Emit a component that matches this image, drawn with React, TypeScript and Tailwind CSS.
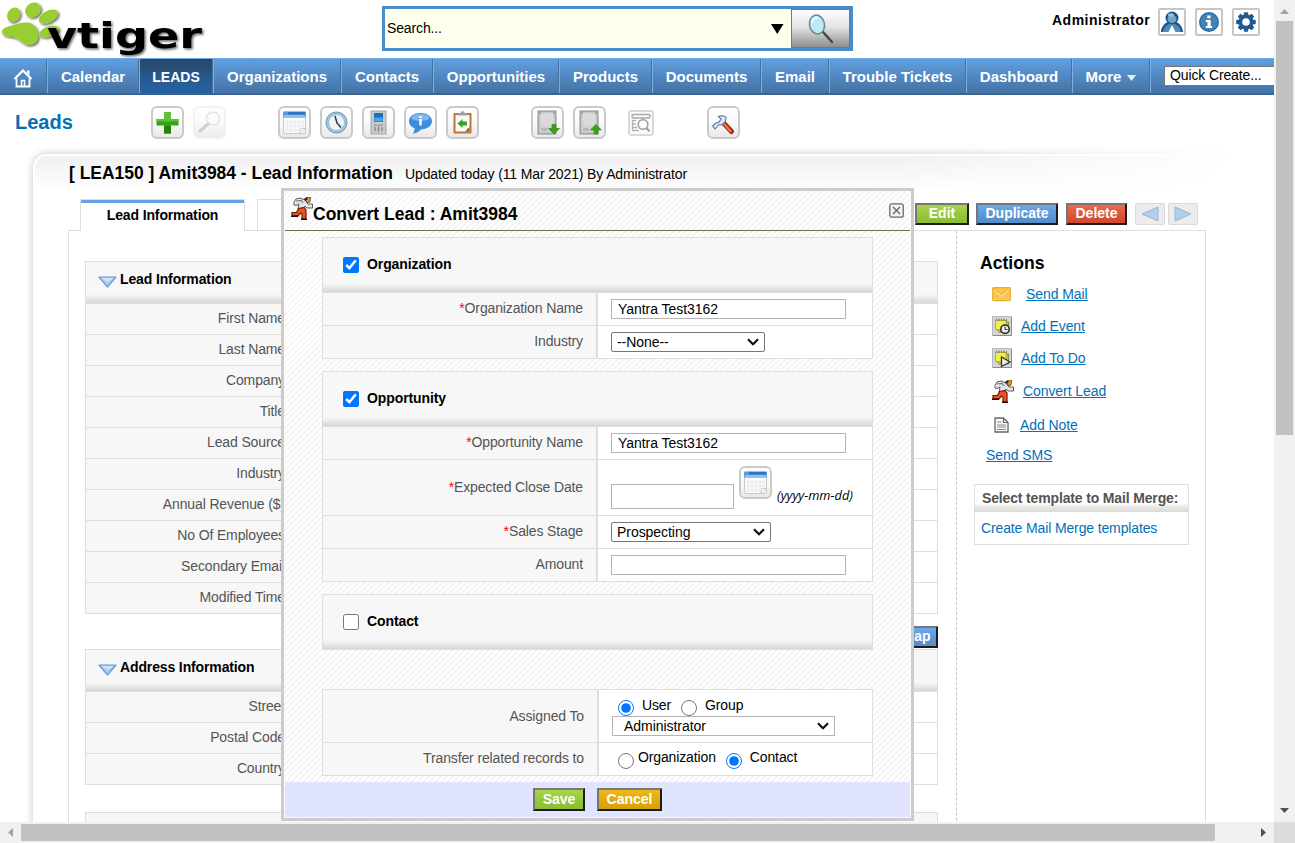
import React from "react";

const HEAD =
  "bg-[linear-gradient(to_bottom,#f7f7f7_0,#f7f7f7_calc(100%-9px),#eeeeea_calc(100%-6px),#d6d7d2_100%)]";

function Logo() {
  return (
    <svg width="206" height="58" viewBox="0 0 206 58" className="block">
      <defs>
        <filter id="ls" x="-10%" y="-10%" width="130%" height="140%">
          <feDropShadow dx="1.5" dy="1.5" stdDeviation="1" floodColor="#000" floodOpacity=".6" />
        </filter>
      </defs>
      <g fill="#9acd32" filter="url(#ls)">
        <ellipse cx="13.700" cy="14.800" rx="6.300" ry="7.500" transform="rotate(30 13.700 14.800)" />
        <ellipse cx="33" cy="10" rx="8.200" ry="7" transform="rotate(-35 33 10)" />
        <ellipse cx="48.500" cy="16.700" rx="10.500" ry="5.800" transform="rotate(-28 48.500 16.700)" />
        <ellipse cx="49" cy="31.500" rx="10.500" ry="5" transform="rotate(-20 49 31.500)" />
        <path d="M2 32C2 28 7 27 12 25.500C18 23.500 27 21 32 24C37 27 39 33 38 38C37 43 33 45 29 45C23 45 19 38 13 37C8 36.500 2 36 2 32Z" />
      </g>
      <text x="47" y="48" fontFamily="DejaVu Sans" fontWeight="700" fontSize="36" textLength="155" lengthAdjust="spacingAndGlyphs" fill="#000" filter="url(#ls)">
        vtiger
      </text>
    </svg>
  );
}

function HeaderIcon({ children }: { children: React.ReactNode }) {
  return (
    <span className="flex h-[28px] w-[28px] items-center justify-center rounded-[2px] border-2 border-[#c6c6c6] bg-white">
      <svg width="24" height="24" viewBox="0 0 24 24">{children}</svg>
    </span>
  );
}

function Header() {
  return (
    <div className="flex h-[58px] shrink-0">
      <div className="w-[382px]">
        <Logo />
      </div>
      <div className="mt-[6px] flex h-[45px] w-[471px] border-[3px] border-[#4a8bcb] bg-[#ffffee]">
        <div className="flex flex-1 items-center pl-[2px] pr-[7px] text-[14px] tracking-[-0.13px] text-black">
          <span>Search...</span>
          <svg className="ml-auto" width="13" height="10" viewBox="0 0 13 10">
            <path d="M0 0H12.500L6.250 10Z" fill="#000" />
          </svg>
        </div>
        <div className="flex w-[59px] items-center justify-center border border-[#777] bg-[linear-gradient(#ffffff,#e4e4e4_45%,#8f8f8f)]">
          <svg width="28" height="32" viewBox="0 0 28 32">
            <path d="M16 19L25 29" stroke="#444" strokeWidth="2.400" strokeLinecap="round" />
            <ellipse cx="10" cy="11.500" rx="7.500" ry="9.500" fill="#bdeaf6" stroke="#6d8790" strokeWidth="1.500" transform="rotate(-12 10 11.500)" />
            <path d="M5 10C5.500 6 8 4.500 11 4.500" stroke="#fff" strokeWidth="1.800" fill="none" opacity=".8" />
          </svg>
        </div>
      </div>
      <div className="ml-[199px] flex h-[44px] items-start pt-[8px]">
        <span className="mr-[8px] w-[98px] whitespace-nowrap text-[14px] font-bold leading-[24px] tracking-[0.5px]">Administrator</span>
        <div className="flex gap-[9px]">
          <HeaderIcon>
            <path d="M1 22C1.500 17.500 4 13.500 8 12H16C20 13.500 22.500 17.500 23 22H15.500L12 15L8.500 22Z" fill="#4d8cbc" />
            <path d="M1 22C1.500 17.500 4 13.500 8 12L10 13.500C6 15 3.500 18 3 22ZM23 22C22.500 17.500 20 13.500 16 12L14 13.500C18 15 20.500 18 21 22Z" fill="#1d5788" />
            <circle cx="12" cy="8" r="6.500" fill="#1d5788" />
            <ellipse cx="12" cy="9" rx="4.500" ry="4" fill="#6fa4cc" />
            <ellipse cx="11" cy="5" rx="3" ry="1.800" fill="#9cc3df" />
          </HeaderIcon>
          <HeaderIcon>
            <circle cx="12" cy="12" r="10" fill="#2d6da2" />
            <circle cx="12" cy="12" r="8.500" fill="#4283b3" />
            <path d="M10.300 5.500H13.500V8.300H10.300ZM8.800 10H13.700V16H15V18H8.800V16H10.500V12H8.800Z" fill="#fff" />
          </HeaderIcon>
          <HeaderIcon>
            <g fill="#1c5a8f">
              <circle cx="12" cy="12" r="7.600" />
              {[0, 45, 90, 135].map((a) => (
                <rect key={a} x="9.800" y="2.200" width="4.400" height="19.600" rx="1" transform={`rotate(${a} 12 12)`} />
              ))}
            </g>
            <circle cx="12" cy="12" r="3.800" fill="#fff" />
          </HeaderIcon>
        </div>
      </div>
    </div>
  );
}

function NavItem({ w, label, active, more }: { w: string; label: string; active?: boolean; more?: boolean }) {
  return (
    <div
      className={
        "flex h-[35px] items-center justify-center whitespace-nowrap border-l border-l-[#7db0e0] border-r border-r-[#41719f] pt-[2px] font-bold text-white " +
        w +
        (active ? " bg-[linear-gradient(#2a4766,#27588c_50%,#2463a5)] text-[14px]" : " text-[15px]")
      }
    >
      {label}
      {more && (
        <svg className="ml-[6px]" width="9" height="6" viewBox="0 0 9 6">
          <path d="M0 0H9L4.500 6Z" fill="#e6eef7" />
        </svg>
      )}
    </div>
  );
}

function Nav() {
  return (
    <div className="flex h-[37px] shrink-0 overflow-hidden border-b-2 border-t border-b-[#3a6592] border-t-[#6aabe9] bg-[linear-gradient(#619fe0,#4372a5)]">
      <div className="flex h-[35px] w-[47px] shrink-0 items-center justify-center border-r border-r-[#41719f] pt-[2px]">
        <svg width="20" height="20" viewBox="0 0 20 20">
          <path d="M3.500 10.500V18.500H16.500V10.500" fill="none" stroke="#fff" strokeWidth="1.800" />
          <path d="M8.500 18V12.500H11.500V18" fill="none" stroke="#fff" strokeWidth="1.500" />
          <path d="M1.500 11L10 2.500L18.500 11" fill="none" stroke="#fff" strokeWidth="2.200" />
          <path d="M14 2.500H16.500V7L14 5Z" fill="#fff" />
        </svg>
      </div>
      <NavItem w="w-[92px] shrink-0" label="Calendar" />
      <NavItem w="w-[74px] shrink-0" label="LEADS" active />
      <NavItem w="w-[128px] shrink-0" label="Organizations" />
      <NavItem w="w-[92px] shrink-0" label="Contacts" />
      <NavItem w="w-[126px] shrink-0" label="Opportunities" />
      <NavItem w="w-[93px] shrink-0" label="Products" />
      <NavItem w="w-[109px] shrink-0" label="Documents" />
      <NavItem w="w-[68px] shrink-0" label="Email" />
      <NavItem w="w-[137px] shrink-0" label="Trouble Tickets" />
      <NavItem w="w-[106px] shrink-0" label="Dashboard" />
      <NavItem w="w-[78px] shrink-0" label="More" more />
      <div className="flex flex-1 border-l border-l-[#7db0e0] pl-[13px] pt-[7px]">
        <div className="h-[20px] w-[160px] shrink-0 whitespace-nowrap border border-[#767676] bg-white pl-[5px] text-[14px] leading-[17px] tracking-[-0.13px] text-black">
          Quick Create...
        </div>
      </div>
    </div>
  );
}

function Tool({ children, faded }: { children: React.ReactNode; faded?: boolean }) {
  return (
    <span
      className={
        "flex h-[33px] w-[33px] shrink-0 items-center justify-center rounded-[6px] border-2 bg-[linear-gradient(#ffffff,#f8f8f8_55%,#e8e8e8)] " +
        (faded ? "border-[#f0f0f0] opacity-80" : "border-[#cacaca]")
      }
    >
      <svg width="29" height="29" viewBox="0 0 29 29">{children}</svg>
    </span>
  );
}

function CalendarGlyph() {
  return (
    <>
      <rect x="3.500" y="4" width="22" height="21.500" rx="1.500" fill="#fbfbfb" stroke="#c4c9ce" />
      <rect x="3" y="3.500" width="23" height="6" rx="1" fill="#5b9bdb" />
      <rect x="8" y="4" width="17" height="2.500" fill="#2f75bd" />
      <rect x="4" y="7" width="21" height="2.500" fill="#8fc0ee" />
      <path d="M7 12V24M11 12V24M15 12V24M19 12V24M23 12V20M5 14H24M5 18H24M5 22H20" stroke="#e6e8ea" strokeWidth="1" />
      <path d="M20 25.500L25.500 20.500H21Q20 21 20 25.500Z" fill="#fff" stroke="#bfc3c7" strokeWidth=".8" />
    </>
  );
}

function Disk() {
  return (
    <>
      <rect x="5" y="3" width="18" height="23" fill="#b9bbbc" stroke="#8e9091" strokeWidth="1" />
      <rect x="6.500" y="4.500" width="15" height="20" fill="#cfd1d2" />
      <ellipse cx="14" cy="11.500" rx="6.500" ry="7" fill="#dadbdc" />
      <path d="M8 20H14V23H8Z" fill="#b6b9ba" />
      <circle cx="7" cy="5" r=".7" fill="#666" />
      <circle cx="21" cy="5" r=".7" fill="#666" />
    </>
  );
}

function Toolbar() {
  return (
    <div className="flex h-[58px] shrink-0 pt-[11px]">
      <div className="w-[136px] shrink-0 pl-[15px] text-[20px] font-bold leading-[32px] text-[#0070ba]">Leads</div>
      <div className="ml-[15px] flex gap-[9px]">
        <Tool>
          <path d="M11 4H18V11H25.500V17.500H18V25.500H11V17.500H3.500V11H11Z" fill="#33a310" />
          <path d="M11 4H18V11H25.500V13.500H3.500V11H11Z" fill="#5fc03a" />
          <path d="M11 18H18V25.500H11Z" fill="#23840a" />
        </Tool>
        <Tool faded>
          <circle cx="18" cy="10.500" r="6.500" fill="#fbfbfb" stroke="#dedede" strokeWidth="1.500" />
          <path d="M13 16L5 23" stroke="#c4c4c4" strokeWidth="3" strokeLinecap="round" />
        </Tool>
      </div>
      <div className="ml-[52px] flex gap-[9px]">
        <Tool>
          <CalendarGlyph />
        </Tool>
        <Tool>
          <circle cx="14.500" cy="14.500" r="10.500" fill="#a3c8de" stroke="#6c93ac" strokeWidth="1" />
          <circle cx="14.500" cy="14.500" r="8" fill="#edf5fa" stroke="#88aec6" strokeWidth=".8" />
          <path d="M13 8L15 15L19 19.500" stroke="#333" strokeWidth="1.500" fill="none" />
        </Tool>
        <Tool>
          <rect x="7" y="3" width="15" height="23" fill="#c8cbce" stroke="#96999c" strokeWidth=".8" />
          <rect x="10" y="5" width="9" height="9" fill="#1771c0" />
          <rect x="10.500" y="9.500" width="8" height="4" fill="#48a8ea" />
          <path d="M10.500 17H12.500M13.500 17.500H15.500M16.500 17H18.500M11 19V23M14.500 19V24M18 19V23" stroke="#85888b" strokeWidth="1.400" />
        </Tool>
        <Tool>
          <path d="M14.500 5C21 5 26 8.500 26 13.300C26 18 21 21.500 15 21.500C12.500 24 10 25.500 6.500 25.500C8 24 8.500 22.500 8.500 20.200C5 18.800 3 16.500 3 13.300C3 8.500 8 5 14.500 5Z" fill="#3c8ddc" />
          <ellipse cx="14.500" cy="9.500" rx="9" ry="3.600" fill="#7db9ef" />
          <path d="M13.300 8H15.700V9.900H13.300ZM13.300 11H15.700V17.500H13.300Z" fill="#fff" />
        </Tool>
        <Tool>
          <rect x="5.500" y="5" width="18" height="20.500" rx="1" fill="#b87839" />
          <rect x="7.500" y="7" width="14" height="16.500" fill="#fafafa" />
          <path d="M17 23.500L21.500 19V23.500Z" fill="#8c5a28" />
          <path d="M10 7.500V5H12.500C12.500 2.500 16.500 2.500 16.500 5H19V7.500Z" fill="#9aa0a6" />
          <path d="M9.500 15.500L14.500 11V13.500H19V17.500H14.500V20Z" fill="#35a614" />
        </Tool>
      </div>
      <div className="ml-[52px] flex gap-[9px]">
        <Tool>
          <Disk />
          <path d="M21 26L15.500 20.500H19V16.500H23V20.500H26.500Z" fill="#35a614" stroke="#2b7e12" strokeWidth=".6" />
        </Tool>
        <Tool>
          <Disk />
          <path d="M21 16.500L26.500 22H23V26H19V22H15.500Z" fill="#35a614" stroke="#2b7e12" strokeWidth=".6" />
        </Tool>
      </div>
      <svg className="ml-[22px] mt-[4px] shrink-0" width="26" height="26" viewBox="0 0 26 26">
        <rect x="1" y="1" width="24" height="24" rx="2" fill="#fbfbfb" stroke="#cdcdcd" strokeWidth="1.500" />
        <rect x="4" y="4.500" width="18" height="3.500" rx="1.500" fill="none" stroke="#a8a8a8" strokeWidth="1.400" />
        <path d="M8 10.500H4.500V20.500H11M4.500 14H8M4.500 17.500H9" stroke="#b4b4b4" strokeWidth="1.300" fill="none" />
        <circle cx="15" cy="14.500" r="4.800" fill="#fff" stroke="#a0a0a0" strokeWidth="1.600" />
        <path d="M18.500 18L21.500 21.500" stroke="#a0a0a0" strokeWidth="2" />
      </svg>
      <div className="ml-[53px]">
        <Tool>
          <path d="M15 15.500L22.500 23.500" stroke="#a3240c" strokeWidth="5" strokeLinecap="round" />
          <path d="M14.500 15.500L21.500 23" stroke="#f27a45" strokeWidth="2.400" strokeLinecap="round" />
          <path d="M3.500 18L6 21L10 16.500L13 17L16.500 13.500L17 9L13 7.500L9.500 8.500L12 11L10 14L7 15Z" fill="#dfe9f6" stroke="#5973a5" strokeWidth="1.100" />
        </Tool>
      </div>
    </div>
  );
}

function Btn({ label, cls }: { label: string; cls: string }) {
  return (
    <span
      className={
        "flex justify-center whitespace-nowrap border-2 border-b-[#1c1c1c] border-l-[#767676] border-r-[#1c1c1c] border-t-[#767676] text-[14px] font-bold leading-[17px] text-white " +
        cls
      }
    >
      {label}
    </span>
  );
}

const GREEN = "bg-[linear-gradient(#a9d54a,#93c43b_60%,#8cbd35)]";
const BLUE = "bg-[linear-gradient(#6aa9ea,#5b95d3_60%,#568cc8)]";

function Section({ title, rows, cls }: { title?: string; rows: string[]; cls: string }) {
  return (
    <div className={"w-[853px] shrink-0 border border-[#dedede] " + cls}>
      <div className={"flex h-[41px] items-start pl-[12px] " + HEAD}>
        {title && (
          <>
            <svg className="mt-[14px]" width="19" height="12" viewBox="0 0 19 12">
              <path d="M1 1H18L9.500 11Z" fill="#a4cdf5" stroke="#6b9bd0" strokeWidth="1.200" strokeLinejoin="round" />
              <path d="M3.500 2H15.500L9.500 6Z" fill="#cde4fb" />
            </svg>
            <span className="ml-[3px] mt-[9px] text-[14px] font-bold leading-[16px] tracking-[-0.13px]">{title}</span>
          </>
        )}
      </div>
      {rows.map((r) => (
        <div key={r} className="flex h-[31px] border-t border-[#dedede]">
          <div className="w-[213px] whitespace-nowrap bg-[#f7f7f7] pr-[14px] text-right text-[14px] leading-[29px] tracking-[-0.13px] text-[#545454]">{r}</div>
        </div>
      ))}
    </div>
  );
}

function Runner() {
  return (
    <svg width="22" height="23" viewBox="0 0 22 23" className="block">
      <path d="M3 5L5 2L9 1L14 3L17 7H21.500V11H16L14 9L13 12H7L8 7L5 8.500L3 8Z" fill="#e4e4ea" stroke="#5c5c60" strokeWidth="1" />
      <path d="M5 4L10 3.500L12 6" stroke="#77777d" strokeWidth="1.200" fill="none" />
      <path d="M14 2L16 0H19.500L19 5L16 5.500Z" fill="#e2a02c" stroke="#4a3510" strokeWidth=".8" />
      <path d="M12.500 2L16 .3L17 2L14.500 4Z" fill="#2c2c30" />
      <path d="M7.500 11.500L13 10.500L15 13V22H11V17L9.500 16L7 19H1V15.500H5.500Z" fill="#f0501c" stroke="#6d1b07" strokeWidth="1.200" />
      <path d="M0 19.300H7M10 22.300H16" stroke="#1d0d08" strokeWidth="1.400" />
    </svg>
  );
}

function EventIcon({ todo }: { todo?: boolean }) {
  return (
    <svg width="20" height="20" viewBox="0 0 20 20" className="block">
      <rect x=".5" y=".5" width="19" height="19" fill="#d6d6d6" stroke="#b9b9b9" />
      <path d="M19.500 1V19.500H1" stroke="#8c8c8c" fill="none" />
      <path d="M5 6H16.500V16H7.500L5 14Z" fill="#c9c235" stroke="#6e6a30" strokeWidth=".7" />
      <rect x="3.500" y="4.500" width="10.500" height="9" fill="#f4ee4c" stroke="#b9a92a" strokeWidth=".8" />
      <path d="M4.500 2.800V5M7 2.800V5M9.500 2.800V5M12 2.800V5M14.300 3.200V5" stroke="#777" strokeWidth="1.200" />
      {todo ? (
        <path d="M9.500 9L18 14L9.500 18.500Z" fill="#eee" stroke="#333" strokeWidth="1.300" />
      ) : (
        <>
          <circle cx="13" cy="13.200" r="4.200" fill="#eee" stroke="#2b2b2b" strokeWidth="1.600" />
          <path d="M13 10.500V13.500H15.500" stroke="#333" fill="none" />
        </>
      )}
    </svg>
  );
}

function Action({ label, h, gap, children }: { label: string; h: string; gap: string; children?: React.ReactNode }) {
  return (
    <div className={"flex items-center text-[14px] tracking-[-0.08px] text-[#0070ba] " + h}>
      {children}
      <span className={"underline underline-offset-1 " + gap}>{label}</span>
    </div>
  );
}

function Sidebar() {
  return (
    <div className="flex w-[248px] flex-col pl-[17px] pt-[19px]">
      <div className="h-[28px] pl-[6px] text-[17.6px] font-bold leading-[26px]">Actions</div>
      <div className="flex flex-col pl-[18px]">
        <Action label="Send Mail" h="h-[32px]" gap="ml-[15px]">
          <svg width="19" height="15" viewBox="0 0 19 15">
            <rect x=".7" y=".7" width="17.600" height="13" rx="1" fill="#fcc646" stroke="#e9ad2c" strokeWidth="1.200" />
            <path d="M2 2L9.500 9L17 2M2 13L7.500 7.500M17 13L11.500 7.500" stroke="#fff2c4" strokeWidth="1.200" fill="none" />
            <path d="M2 1.500L9.500 8L17 1.500M2.500 12.500L7 8M16.500 12.500L12 8" stroke="#d9982a" strokeWidth=".9" fill="none" />
          </svg>
        </Action>
        <Action label="Add Event" h="h-[32px]" gap="ml-[9px]">
          <EventIcon />
        </Action>
        <Action label="Add To Do" h="h-[32px]" gap="ml-[9px]">
          <EventIcon todo />
        </Action>
        <Action label="Convert Lead" h="h-[34px]" gap="ml-[9px]">
          <Runner />
        </Action>
        <Action label="Add Note" h="h-[34px]" gap="ml-[11px]">
          <svg className="ml-[2px]" width="15" height="16" viewBox="0 0 15 16">
            <path d="M1 1H9.500L14 5.500V15H1Z" fill="#fafafa" stroke="#666" strokeWidth="1.300" />
            <path d="M9.500 1V5.500H14" fill="none" stroke="#666" strokeWidth="1.200" />
            <path d="M3 5H7.500M3 8H12M3 10H12M3 12.500H12" stroke="#888" strokeWidth="1" />
          </svg>
        </Action>
      </div>
      <div className="h-[26px] pl-[12px] text-[14px] leading-[26px] tracking-[-0.08px] text-[#0070ba]">
        <span className="underline underline-offset-1">Send SMS</span>
      </div>
      <div className="mt-[16px] h-[61px] w-[215px] border border-[#dedede]">
        <div className="h-[27px] whitespace-nowrap bg-[linear-gradient(to_bottom,#ffffff_0,#ffffff_19px,#f0f0ec_20px,#d8d9d4_27px)] pl-[7px] text-[14px] font-bold leading-[27px] tracking-[-0.15px] text-[#545454]">
          Select template to Mail Merge:
        </div>
        <div className="whitespace-nowrap pl-[6px] text-[14px] leading-[32px] tracking-[-0.13px] text-[#0070ba]">Create Mail Merge templates</div>
      </div>
    </div>
  );
}

function Arrow({ right }: { right?: boolean }) {
  return (
    <span className="flex h-[22px] w-[30px] items-center justify-center rounded-[2px] border border-[#d9d9d9] bg-[#ececec]">
      <svg width="18" height="16" viewBox="0 0 18 16">
        <path d={right ? "M1 1L17 8L1 15Z" : "M17 1L1 8L17 15Z"} fill="#b4cfea" stroke="#94b6d9" />
      </svg>
    </span>
  );
}

function Panel() {
  return (
    <div className="relative min-h-0 flex-1 overflow-hidden">
      <div className="flex h-[46px] items-start pl-[69px] pt-[8px]">
        <span className="w-[336px] whitespace-nowrap text-[17.45px] font-bold leading-[24px]">[ LEA150 ] Amit3984 - Lead Information</span>
        <span className="whitespace-nowrap text-[14px] leading-[26px] tracking-[-0.13px]">Updated today (11 Mar 2021) By Administrator</span>
      </div>
      <div className="flex h-[32px] pl-[68px]">
        <div className="w-[12px] border-b border-[#dedede]" />
        <div className="w-[165px] border border-b-0 border-[#dedede] text-center text-[14px] font-bold tracking-[-0.13px]">
          <div className="h-[3px] bg-[#66a3e3]" />
          <div className="leading-[24px]">Lead Information</div>
        </div>
        <div className="w-[12px] border-b border-[#dedede]" />
        <div className="w-[150px] border border-[#dedede]" />
        <div className="flex w-[799px] items-start border-b border-[#dedede] pt-[4px]">
          <Btn label="Edit" cls={"ml-[508px] h-[22px] w-[54px] " + GREEN} />
          <Btn label="Duplicate" cls={"ml-[7px] h-[22px] w-[82px] " + BLUE} />
          <Btn label="Delete" cls="ml-[8px] h-[22px] w-[61px] bg-[linear-gradient(#ea6a4c,#dc5236_60%,#cf4a2e)]" />
          <div className="ml-[8px] flex gap-[3px]">
            <Arrow />
            <Arrow right />
          </div>
        </div>
      </div>
      <div className="ml-[68px] flex h-[700px] w-[1138px] border-x border-[#dedede]">
        <div className="flex w-[888px] shrink-0 flex-col border-r border-dashed border-[#c4c4c4] pl-[16px] pt-[30px]">
          <Section
            cls=""
            title="Lead Information"
            rows={["First Name", "Last Name", "Company", "Title", "Lead Source", "Industry", "Annual Revenue ($)", "No Of Employees", "Secondary Email", "Modified Time"]}
          />
          <div className="flex h-[35px] w-[853px] shrink-0 justify-end pt-[12px]">
            <Btn label="Locate Map" cls={"h-[22px] w-[92px] " + BLUE} />
          </div>
          <Section cls="" title="Address Information" rows={["Street", "Postal Code", "Country"]} />
          <Section cls="mt-[27px]" rows={[]} />
        </div>
        <Sidebar />
      </div>
    </div>
  );
}

function Card({ title, checked, cls, children }: { title: string; checked?: boolean; cls: string; children?: React.ReactNode }) {
  return (
    <div className={"w-[551px] shrink-0 border border-[#dedede] " + cls}>
      <div className={"flex h-[54px] items-center pl-[20px] " + HEAD}>
        <input type="checkbox" defaultChecked={checked} className="h-[16px] w-[16px]" />
        <span className="-mt-[2px] ml-[8px] text-[14px] font-bold tracking-[-0.1px]">{title}</span>
      </div>
      {children}
    </div>
  );
}

function Field({
  label,
  req,
  h,
  w,
  first,
  shift,
  children,
}: {
  label: string;
  req?: boolean;
  h: string;
  w?: string;
  first?: boolean;
  shift?: string;
  children: React.ReactNode;
}) {
  return (
    <div className={"flex " + (first ? "" : "border-t border-[#dedede] ") + h}>
      <div className={"flex items-center justify-end border-r-2 border-[#dedede] bg-[#f7f7f7] pr-[13px] text-[14px] tracking-[-0.13px] text-[#545454] " + (w ?? "w-[275px]")}>
        <span className={shift ?? "-mt-[2px]"}>
          {req && <span className="text-[#ff0000]">*</span>}
          {label}
        </span>
      </div>
      <div className="flex flex-1 items-center bg-white pl-[13px] text-[14px] tracking-[-0.13px] text-black">{children}</div>
    </div>
  );
}

function Select({ label, cls }: { label: string; cls: string }) {
  return (
    <span className={"flex h-[20px] items-center border bg-white pr-[5px] text-[14px] leading-[18px] tracking-[-0.05px] text-black " + cls}>
      {label}
      <svg className="ml-auto" width="12" height="8" viewBox="0 0 12 8">
        <path d="M1 1.200L6 6.200L11 1.200" fill="none" stroke="#111" strokeWidth="2.200" />
      </svg>
    </span>
  );
}

function Modal() {
  return (
    <div className="absolute left-[281px] top-[188px] flex h-[633px] w-[633px] flex-col border-[3px] border-[#cccccc] bg-[repeating-linear-gradient(135deg,#ffffff_0,#ffffff_2.2px,#f5f5f5_2.2px,#f5f5f5_4.24px)] p-px">
      <div className="flex h-[39px] shrink-0 border-b border-[#6f6f45] pl-[6px]">
        <div className="mt-[5px]">
          <Runner />
        </div>
        <span className="mt-[9px] whitespace-nowrap text-[17.5px] font-bold leading-[26px]">Convert Lead : Amit3984</span>
        <svg className="ml-auto mr-[6px] mt-[11px]" width="15" height="15" viewBox="0 0 15 15">
          <rect x=".8" y=".8" width="13.400" height="13.400" rx="2" fill="#f4f4f4" stroke="#666" strokeWidth="1.300" />
          <path d="M4 4L11 11M11 4L4 11" stroke="#666" strokeWidth="1.400" />
        </svg>
      </div>
      <div className="flex flex-col pl-[37px] pt-[6px]">
        <Card title="Organization" checked cls="">
          <Field label="Organization Name" req h="h-[33px]">
            <input defaultValue="Yantra Test3162" className="h-[20px] w-[235px] border border-[#b5b5b5] bg-white pl-[6px] tracking-[-0.05px]" />
          </Field>
          <Field label="Industry" h="h-[33px]">
            <Select label="--None--" cls="w-[154px] rounded-[2px] border-[#767676] pl-[5px]" />
          </Field>
        </Card>
        <Card title="Opportunity" checked cls="mt-[12px]">
          <Field label="Opportunity Name" req h="h-[33px]">
            <input defaultValue="Yantra Test3162" className="h-[20px] w-[235px] border border-[#b5b5b5] bg-white pl-[6px] tracking-[-0.05px]" />
          </Field>
          <Field label="Expected Close Date" req h="h-[56px]" shift="">
            <input className="mt-[18px] h-[25px] w-[123px] border border-[#b5b5b5] bg-white" />
            <span className="-mt-[11px] ml-[5px]">
              <Tool>
                <CalendarGlyph />
              </Tool>
            </span>
            <span className="ml-[5px] mt-[17px] font-['Open_Sans',sans-serif] text-[12.8px] italic tracking-normal">(yyyy-mm-dd)</span>
          </Field>
          <Field label="Sales Stage" req h="h-[33px]">
            <Select label="Prospecting" cls="w-[160px] rounded-[2px] border-[#767676] pl-[5px]" />
          </Field>
          <Field label="Amount" h="h-[33px]">
            <input className="h-[20px] w-[235px] border border-[#b5b5b5] bg-white" />
          </Field>
        </Card>
        <Card title="Contact" cls="mt-[12px]" />
        <div className="mt-[39px] w-[551px] border border-[#dedede]">
          <Field label="Assigned To" h="h-[52px]" w="w-[276px]" first shift="">
            <div className="flex flex-col pt-[2px]">
              <div className="flex h-[18px] items-start pl-[6px] leading-[16px]">
                <input type="radio" name="owner" defaultChecked className="mt-[2px] h-[16px] w-[16px]" />
                <span className="-mt-px ml-[8px]">User</span>
                <input type="radio" name="owner" className="ml-[10px] mt-[2px] h-[16px] w-[16px]" />
                <span className="-mt-px ml-[8px]">Group</span>
              </div>
              <Select label="Administrator" cls="w-[223px] border-[#b5b5b5] pl-[11px]" />
            </div>
          </Field>
          <Field label="Transfer related records to" h="h-[33px]" w="w-[276px]">
            <div className="flex items-start pl-[6px] leading-[16px]">
              <input type="radio" name="transfer" className="mt-[4px] h-[16px] w-[16px]" />
              <span className="ml-[4px]">Organization</span>
              <input type="radio" name="transfer" defaultChecked className="ml-[10px] mt-[4px] h-[16px] w-[16px]" />
              <span className="ml-[8px]">Contact</span>
            </div>
          </Field>
        </div>
      </div>
      <div className="mt-auto flex h-[35px] shrink-0 gap-[12px] bg-[#e1e4ff] pl-[248px] pt-[6px]">
        <Btn label="Save" cls={"h-[23px] w-[52px] pt-px " + GREEN} />
        <Btn label="Cancel" cls="h-[23px] w-[65px] bg-[linear-gradient(#efb91a,#dfa90a_60%,#d9a208)] pt-px" />
      </div>
    </div>
  );
}

export default function App() {
  return (
    <div className="relative flex h-[843px] w-[1295px] flex-col overflow-hidden bg-white font-['Liberation_Sans',Arial,sans-serif] text-black">
      <div className="absolute bottom-[21px] left-0 top-[140px] w-[1274px] overflow-hidden [mask-image:linear-gradient(to_right,#000_70%,transparent_97%)]">
        <div className="ml-[33px] mt-[14px] h-[900px] w-[1300px] rounded-tl-[14px] border-l-2 border-t-2 border-white bg-[linear-gradient(#f0f0f0,#ffffff_36px)] shadow-[0_0_8px_rgba(0,0,0,0.24)]" />
      </div>
      <div className="relative flex min-h-0 flex-1">
        <div className="flex w-[1274px] flex-col">
          <Header />
          <Nav />
          <Toolbar />
          <Panel />
        </div>
        <div className="flex w-[21px] flex-col items-center bg-[#f1f1f1]">
          <svg className="h-[21px] shrink-0" width="9" height="21" viewBox="0 0 9 21">
            <path d="M0 14H9L4.500 9Z" fill="#a3a3a3" />
          </svg>
          <div className="h-[414px] w-[17px] bg-[#c1c1c1]" />
          <svg className="mt-auto shrink-0" width="9" height="21" viewBox="0 0 9 21">
            <path d="M0 7H9L4.500 12Z" fill="#505050" />
          </svg>
        </div>
      </div>
      <div className="relative flex h-[21px] shrink-0 items-center bg-[#f1f1f1]">
        <svg className="w-[21px]" width="21" height="21" viewBox="0 0 21 21">
          <path d="M13 6V15L8 10.500Z" fill="#a3a3a3" />
        </svg>
        <div className="h-[17px] w-[1194px] bg-[#c1c1c1]" />
        <svg className="ml-[38px]" width="21" height="21" viewBox="0 0 21 21">
          <path d="M8 6V15L13 10.500Z" fill="#505050" />
        </svg>
        <div className="h-[21px] flex-1 bg-[#dcdcdc]" />
      </div>
      <Modal />
    </div>
  );
}
